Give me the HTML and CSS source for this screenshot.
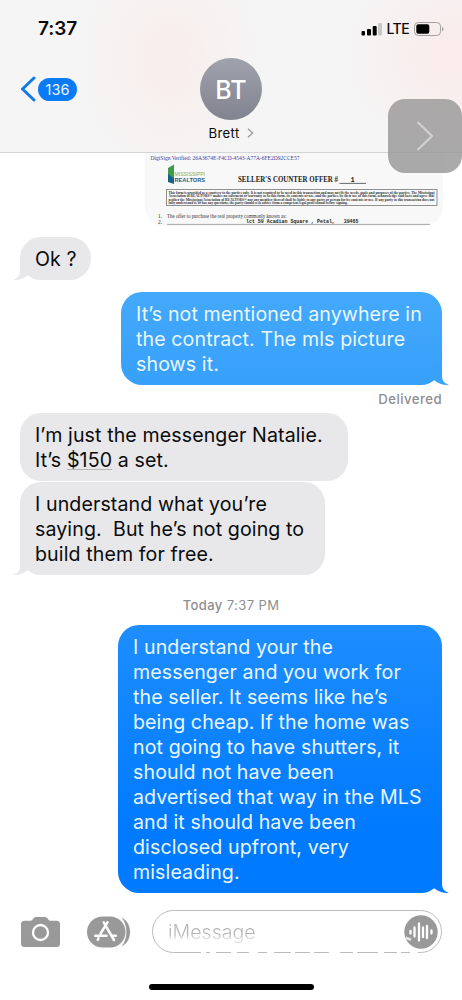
FILE: index.html
```html
<!DOCTYPE html>
<html lang="en">
<head>
    <meta charset="UTF-8">
    <meta name="viewport" content="width=device-width, initial-scale=1.0">
    <title>Messages</title>
    <link rel="stylesheet" href="styles.css">
</head>
<body>
    <div class="phone">
        <header class="header">
            <div class="status-bar">
                <span class="clock">7:37</span>
                <div class="status-icons">
                    <svg class="signal" width="22" height="14" viewBox="0 0 22 14">
                        <rect x="0.5" y="9" width="3.5" height="4.5" rx="1"/>
                        <rect x="6" y="7" width="4" height="6.5" rx="1"/>
                        <rect x="11.7" y="4" width="4" height="9.5" rx="1"/>
                        <rect x="17" y="1" width="4" height="12.5" rx="1" fill="#c8c8c8"/>
                    </svg>
                    <span class="network">LTE</span>
                    <svg class="battery" width="30" height="14" viewBox="0 0 30 14">
                        <rect x="0.5" y="0.5" width="26" height="13" rx="3.8" fill="none" stroke="#a3a09f"/>
                        <rect x="2.3" y="2.3" width="13" height="9.4" rx="2"/>
                        <path d="M28 4.7c2 .8 2 3.8 0 4.6z" fill="#a3a09f"/>
                    </svg>
                </div>
            </div>
            <div class="nav-bar">
                <div class="back">
                    <svg width="16" height="26" viewBox="0 0 16 26">
                        <path d="M14 2L2.5 13L14 24" fill="none" stroke="#1479e8" stroke-width="3" stroke-linecap="round" stroke-linejoin="round"/>
                    </svg>
                    <span class="unread">136</span>
                </div>
                <div class="contact">
                    <div class="avatar">BT</div>
                    <div class="contact-name">Brett
                        <svg width="7" height="10" viewBox="0 0 7 10">
                            <path d="M1 .8L5.6 5L1 9.2" fill="none" stroke="#999" stroke-width="1.3"/>
                        </svg>
                    </div>
                </div>
            </div>
            <div class="float-button">
                <svg width="20" height="32" viewBox="0 0 20 32">
                    <path d="M2.5 2L17 16L2.5 30" fill="none" stroke="#cfcfcf" stroke-width="2.4"/>
                </svg>
            </div>
        </header>

        <main class="conversation">
            <!-- attached contract page -->
            <svg class="attachment" width="298" height="73" viewBox="145 153 298 73">
                <text x="150.5" y="159.6" font-size="6.2" fill="#3b3b9c" textLength="149" lengthAdjust="spacingAndGlyphs">DigiSign Verified: 26A3674E-F4CD-4543-A77A-6FE2D92CCE57</text>
                <path d="M168 168L174 164.5V180L168 182z" fill="#3f9a4b"/>
                <path d="M168 174L174 178.5V184L168 182z" fill="#17618b"/>
                <g class="logo-text">
                    <text x="174.5" y="176.4" font-size="5.2" fill="#8aab58" textLength="30.5" lengthAdjust="spacingAndGlyphs">MISSISSIPPI</text>
                    <text x="174.5" y="182.4" font-size="6" font-weight="bold" fill="#1c5a80" textLength="30.5" lengthAdjust="spacingAndGlyphs">REALTORS</text>
                </g>
                <text x="238" y="182" font-size="7.2" font-weight="bold" fill="#222" textLength="100" lengthAdjust="spacingAndGlyphs">SELLER'S COUNTER OFFER #</text>
                <text x="350.5" y="182" font-size="7" class="typed">1</text>
                <path d="M339.5 183.4H366" stroke="#444" stroke-width=".8"/>
                <rect x="166.5" y="189.5" width="270.5" height="16" fill="none" stroke="#777" stroke-width=".8"/>
                <g font-size="3.5" font-weight="bold" fill="#333">
                    <text x="168.5" y="193.7" textLength="266" lengthAdjust="spacingAndGlyphs">This form is provided as a courtesy to the parties only. It is not required to be used in this transaction and may not fit the needs, goals and purposes of the parties. The Mississippi</text>
                    <text x="168.5" y="197.2" textLength="266" lengthAdjust="spacingAndGlyphs">Association of REALTORS® makes no statement or warranty as to this form, its contents or use, and the parties, by their use of this form, acknowledge said facts and agree that</text>
                    <text x="168.5" y="200.7" textLength="266" lengthAdjust="spacingAndGlyphs">neither the Mississippi Association of REALTORS® nor any member thereof shall be liable to any party or person for its contents or use. If any party to this transaction does not</text>
                    <text x="168.5" y="204.2" textLength="179" lengthAdjust="spacingAndGlyphs">fully understand it, or has any questions, the party should seek advice from a competent legal professional before signing.</text>
                </g>
                <g font-size="5.4" fill="#333">
                    <text x="158" y="217.8">1.</text>
                    <text x="167" y="217.8" textLength="119.5" lengthAdjust="spacingAndGlyphs">The offer to purchase the real property commonly known as:</text>
                    <text x="158" y="224">2.</text>
                </g>
                <text x="246" y="223.4" font-size="5" class="typed" textLength="112.5" lengthAdjust="spacingAndGlyphs" xml:space="preserve">lct 59 Acadian Square , Petal,   39465</text>
                <path d="M167 224.4H430" stroke="#888" stroke-width=".7"/>
            </svg>

            <div class="bubble received ok">Ok ?
                <svg class="tail" width="20" height="21" viewBox="8 0 20 21"><path d="M8 0H20V11C20 15.5 22.5 18.5 27 20C21 20.3 16 18.5 12.3 15.3L8 16z"/></svg>
            </div>
            <div class="bubble sent first">It’s not mentioned anywhere in<br>the contract. The mls picture<br>shows it.
                <svg class="tail" width="20" height="21" viewBox="8 0 20 21"><path d="M8 0H20V11C20 15.5 22.5 18.5 27 20C21 20.3 16 18.5 12.3 15.3L8 16z"/></svg>
            </div>
            <div class="receipt">Delivered</div>
            <div class="bubble received messenger">I’m just the messenger Natalie.<br>It’s <span class="amount">$150</span> a set.</div>
            <div class="bubble received saying">I understand what you’re<br>saying.&nbsp; But he’s not going to<br>build them for free.
                <svg class="tail" width="20" height="21" viewBox="8 0 20 21"><path d="M8 0H20V11C20 15.5 22.5 18.5 27 20C21 20.3 16 18.5 12.3 15.3L8 16z"/></svg>
            </div>
            <div class="timestamp"><b>Today</b> 7:37 PM</div>
            <div class="bubble sent second">I understand your the<br>messenger and you work for<br>the seller. It seems like he’s<br>being cheap. If the home was<br>not going to have shutters, it<br>should not have been<br>advertised that way in the MLS<br>and it should have been<br>disclosed upfront, very<br>misleading.
                <svg class="tail" width="20" height="21" viewBox="8 0 20 21"><path d="M8 0H20V11C20 15.5 22.5 18.5 27 20C21 20.3 16 18.5 12.3 15.3L8 16z"/></svg>
            </div>
        </main>

        <footer class="compose">
            <svg class="camera" width="39" height="30" viewBox="0 0 39 30">
                <path d="M3.5 3.7H10C12 3.7 12 0 15 0H24C27 0 27 3.7 29 3.7H35.5Q39 3.7 39 7.2V26.5Q39 30 35.5 30H3.5Q0 30 0 26.5V7.2Q0 3.7 3.5 3.7z" fill="#999"/>
                <circle cx="19.5" cy="15.5" r="7.5" fill="none" stroke="#fff" stroke-width="2.3"/>
            </svg>
            <svg class="apps" width="44" height="32" viewBox="0 0 44 32">
                <path d="M34.5 1.5C46 7 46 25 34.5 30.5C41 23 41 9 34.5 1.5z" fill="#999"/>
                <rect x="0" y="0.5" width="38.5" height="31" rx="15.5" fill="#999"/>
                <g fill="none" stroke="#fff" stroke-width="2.5" stroke-linecap="round">
                    <path d="M16.7 6.3L27 24M20.5 6.3L13.6 17.5M8.3 19.8H19.5M24.7 19.8H28.8M11.5 22.3L10.8 23.8"/>
                </g>
            </svg>
            <div class="field">
                <span class="placeholder">iMessage</span>
                <svg class="voice" width="34" height="34" viewBox="0 0 34 34">
                    <circle cx="17" cy="17" r="16.7" fill="#999"/>
                    <path d="M6.5 16V18.5M10.5 12.5V21.5M15 8.5V25.5M19 12.5V22M23 11V23M27.5 15.5V18.5" stroke="#fff" stroke-width="2.3" stroke-linecap="round"/>
                    <path d="M1.5 22.8L7 24.8" stroke="#e6e6e6" stroke-width="2.6"/>
                </svg>
                <!-- worn patches along the lower edge -->
                <svg class="wear" width="220" height="4" viewBox="0 0 220 4">
                    <path d="M0 2H5M9 2H15M30 2H36M48 2H57M66 2H73M90 2H94M109 2H113M128 2H139M152 2H156M177 2H183M196 2H200M209 2H217" stroke="#fff" stroke-width="2"/>
                </svg>
            </div>
        </footer>
        <div class="home-indicator"></div>
    </div>
</body>
</html>
```

FILE: styles.css
```css
* { box-sizing: border-box; }
body { margin: 0; background-color: #fff; color: #0b0b0c; font-family: 'Inter', sans-serif; }
svg { display: block; flex: none; }
.phone { width: 462px; height: 1000px; display: flex; flex-direction: column; overflow: hidden; }

/* Header */
.header {
    position: relative;
    height: 153px;
    flex: none;
    border-bottom: 1px solid #d5d5d5;
    background:
        radial-gradient(ellipse 90px 120px at 170px 60px, #f8eeec 10%, rgba(248,238,236,0) 100%),
        radial-gradient(ellipse 110px 100px at 455px 55px, #f9eceb 15%, rgba(249,236,235,0) 100%),
        #f5f5f5;
}
.status-bar { display: flex; justify-content: space-between; align-items: center; height: 57px; padding: 0 18px 0 38px; }
.clock { font-size: 19px; font-weight: 600; letter-spacing: -0.1px; }
.status-icons { display: flex; align-items: center; }
.network { font-size: 14px; font-weight: 500; margin: -1px 5px 0 4px; letter-spacing: -0.6px; }
.nav-bar { display: flex; height: 95px; }
.back { display: flex; align-items: center; height: 26px; margin: 19px 0 0 20px; gap: 2px; width: 180px; }
.unread {
    width: 39px;
    height: 23px;
    border-radius: 12px;
    background-color: #0b7af5;
    color: #e8f5ff;
    font-size: 14.5px;
    line-height: 23px;
    text-align: center;
}
.contact { display: flex; flex-direction: column; align-items: center; width: 62px; }
.avatar {
    width: 62px;
    height: 62px;
    margin-top: 1px;
    border-radius: 50%;
    background: linear-gradient(#a0a3ad, #81848e);
    color: #fff;
    font-size: 25px;
    font-weight: 500;
    line-height: 64px;
    text-align: center;
}
.contact-name { display: flex; align-items: center; gap: 7px; margin-top: 4px; font-size: 13.2px; line-height: 18px; letter-spacing: 0.35px; }
.float-button {
    position: absolute;
    left: 388px;
    top: 99px;
    width: 74px;
    height: 74px;
    border-radius: 17px;
    background-color: rgba(153, 151, 151, 0.82);
    display: flex;
    align-items: center;
    justify-content: center;
}

/* Messages */
.conversation { display: flex; flex-direction: column; height: 740px; flex: none; padding: 0 20px; }
.attachment {
    align-self: flex-end;
    margin-right: -1px;
    background-color: #f8f8f8;
    border-radius: 0 0 20px 20px;
    font-family: 'Liberation Serif', serif;
}
.logo-text { font-family: 'Liberation Sans', sans-serif; }
.typed { font-family: 'Liberation Mono', monospace; font-weight: bold; fill: #222; }
.bubble {
    position: relative;
    padding: 10px 15px 8px;
    border-radius: 21px;
    font-size: 19.6px;
    line-height: 25px;
    letter-spacing: 0.1px;
    white-space: nowrap;
}
.received { align-self: flex-start; background-color: #e8e8ea; }
.sent { align-self: flex-end; color: #e9f6ff; }
.tail { position: absolute; bottom: -1px; right: -8px; }
.sent .tail { fill: #38a1fa; }
.second .tail { fill: #007aff; }
.received .tail { fill: #e8e8ea; right: auto; left: -8px; transform: scaleX(-1); }
.ok { width: 71px; margin-top: 11px; }
.first { width: 321px; margin-top: 12px; background: linear-gradient(#43a9fb, #37a0fa); }
.receipt { align-self: flex-end; margin-top: 6px; color: #8e8e92; font-size: 13.2px; font-weight: 500; line-height: 16px; letter-spacing: 0.45px; }
.messenger { width: 328px; margin-top: 6px; }
.amount { text-decoration: underline #b8b8ba 1px; text-underline-offset: 2px; text-decoration-skip-ink: none; }
.saying { width: 305px; margin-top: 1px; }
.timestamp { align-self: center; margin-top: 22px; color: #8e8e92; font-size: 13px; line-height: 16px; letter-spacing: 0.4px; }
.timestamp b { font-weight: 500; }
.second { width: 324px; margin-top: 12px; background: linear-gradient(#1e8efe, #007aff 75%); }

/* Compose bar */
.compose { display: flex; align-items: center; height: 77px; flex: none; padding: 0 20px 0 21px; }
.apps { margin-left: 27px; }
.field {
    position: relative;
    display: flex;
    align-items: center;
    justify-content: space-between;
    width: 290px;
    height: 43px;
    margin-left: auto;
    padding: 0 3px 0 15px;
    border: 1px solid #bcbcbc;
    border-radius: 22px;
}
.placeholder {
    font-size: 19.6px;
    font-weight: 300;
    color: transparent;
    background: linear-gradient(#b5b5b7 60%, #dcdcde 75%);
    -webkit-background-clip: text;
    background-clip: text;
}
.wear { position: absolute; left: 48px; bottom: -3px; }
.home-indicator { width: 165px; height: 6px; margin: 14px 0 0 149px; border-radius: 3px; background-color: #000; }
```
